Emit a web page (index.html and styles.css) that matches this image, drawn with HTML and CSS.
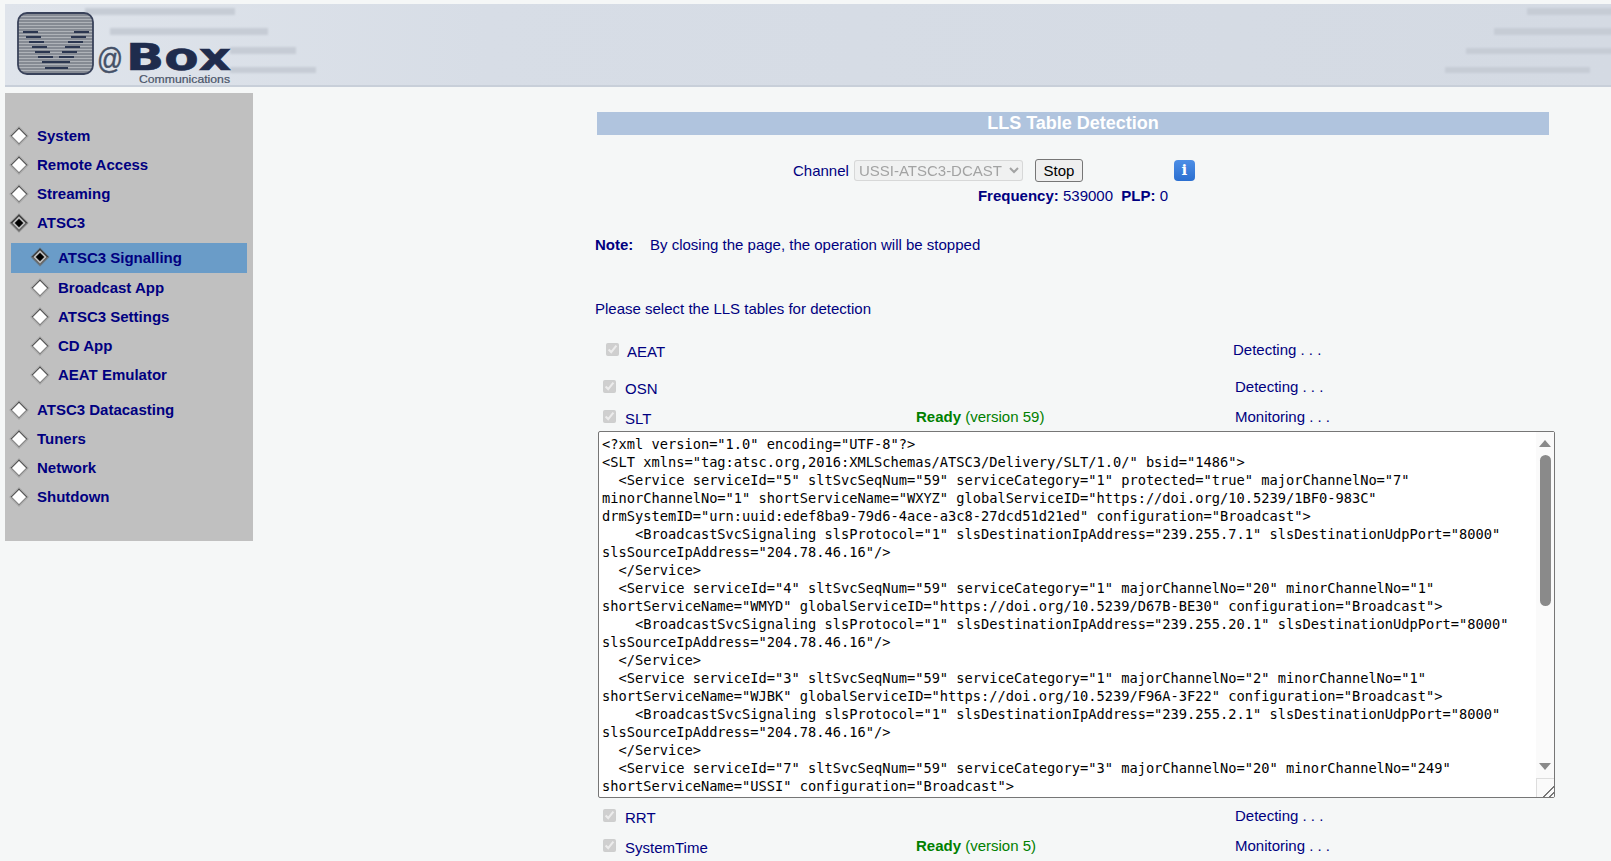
FILE: index.html
```html
<!DOCTYPE html>
<html lang="en">
<head>
    <meta charset="UTF-8">
    <title>LLS Table Detection</title>
    <link rel="stylesheet" href="styles.css">
</head>
<body>
    <header class="banner">
        <svg class="banner-art" width="1606" height="83" viewBox="0 0 1606 83">
            <defs>
                <linearGradient id="bannerBg" x1="0" x2="1" y1="0" y2="0">
                    <stop offset="0" stop-color="#dfe4eb"/>
                    <stop offset="0.3" stop-color="#d7dde6"/>
                    <stop offset="1" stop-color="#d4dae3"/>
                </linearGradient>
                <filter id="soft"><feGaussianBlur stdDeviation="1.1"/></filter>
                <pattern id="scan" width="4" height="3" patternUnits="userSpaceOnUse">
                    <rect width="4" height="3" fill="#858a93"/>
                    <rect width="4" height="1" fill="#afb3b9"/>
                </pattern>
            </defs>
            <rect width="1606" height="83" fill="url(#bannerBg)"/>
            <rect y="81" width="1606" height="2" fill="#c8cfd9"/>
            <g fill="#c6ccd5" filter="url(#soft)">
                <rect x="80" y="4" width="150" height="7"/>
                <rect x="105" y="24" width="158" height="7"/>
                <rect x="225" y="43" width="66" height="7"/>
                <rect x="225" y="63" width="86" height="6"/>
                <rect x="1522" y="4" width="90" height="7"/>
                <rect x="1489" y="24" width="120" height="7"/>
                <rect x="1461" y="44" width="150" height="6"/>
                <rect x="1440" y="63" width="145" height="6"/>
            </g>
            <rect x="13" y="9" width="75" height="61" rx="9" fill="url(#scan)" stroke="#39425a" stroke-width="1.8"/>
            <g fill="#2b3650">
                <rect x="18" y="27" width="15" height="2"/><rect x="69" y="27" width="15" height="2"/>
                <rect x="21" y="32" width="15" height="2"/><rect x="66" y="32" width="15" height="2"/>
                <rect x="24" y="37" width="15" height="2"/><rect x="63" y="37" width="15" height="2"/>
                <rect x="27" y="42" width="15" height="2"/><rect x="60" y="42" width="15" height="2"/>
                <rect x="30" y="47" width="15" height="2"/><rect x="57" y="47" width="15" height="2"/>
                <rect x="33" y="52" width="15" height="2"/><rect x="54" y="52" width="15" height="2"/>
                <rect x="37" y="57" width="28" height="2"/>
                <rect x="40" y="63" width="23" height="2"/>
            </g>
            <text class="logo-at" x="92" y="65" textLength="26" lengthAdjust="spacingAndGlyphs">@</text>
            <text class="logo-box" x="121" y="66" textLength="105" lengthAdjust="spacingAndGlyphs">Box</text>
            <text class="logo-sub" x="134" y="79" textLength="91" lengthAdjust="spacingAndGlyphs">Communications</text>
        </svg>
    </header>

    <div class="page">
        <nav class="sidebar">
            <a class="nav-item"><span class="diamond"></span><span class="nav-label">System</span></a>
            <a class="nav-item"><span class="diamond"></span><span class="nav-label">Remote Access</span></a>
            <a class="nav-item"><span class="diamond"></span><span class="nav-label">Streaming</span></a>
            <a class="nav-item"><span class="diamond open"></span><span class="nav-label">ATSC3</span></a>
            <div class="submenu">
                <a class="nav-item sub current"><span class="diamond open"></span><span class="nav-label">ATSC3 Signalling</span></a>
                <a class="nav-item sub"><span class="diamond"></span><span class="nav-label">Broadcast App</span></a>
                <a class="nav-item sub"><span class="diamond"></span><span class="nav-label">ATSC3 Settings</span></a>
                <a class="nav-item sub"><span class="diamond"></span><span class="nav-label">CD App</span></a>
                <a class="nav-item sub"><span class="diamond"></span><span class="nav-label">AEAT Emulator</span></a>
            </div>
            <a class="nav-item"><span class="diamond"></span><span class="nav-label">ATSC3 Datacasting</span></a>
            <a class="nav-item"><span class="diamond"></span><span class="nav-label">Tuners</span></a>
            <a class="nav-item"><span class="diamond"></span><span class="nav-label">Network</span></a>
            <a class="nav-item"><span class="diamond"></span><span class="nav-label">Shutdown</span></a>
        </nav>

        <main class="content">
            <h1 class="title">LLS Table Detection</h1>
            <div class="channel-row">
                <label class="channel-label">Channel</label>
                <select class="channel-select" disabled><option>USSI-ATSC3-DCAST</option></select>
                <button class="stop-btn">Stop</button>
                <span class="info-btn">i</span>
            </div>
            <p class="freq"><b>Frequency:</b> 539000&nbsp; <b>PLP:</b> 0</p>
            <p class="note"><b class="note-tag">Note:</b>By closing the page, the operation will be stopped</p>
            <p class="prompt">Please select the LLS tables for detection</p>

            <div class="table-row first">
                <label class="table-name"><input type="checkbox" checked disabled>AEAT</label>
                <span class="table-ready"></span>
                <span class="table-state">Detecting . . .</span>
            </div>
            <div class="table-row osn">
                <label class="table-name"><input type="checkbox" checked disabled>OSN</label>
                <span class="table-ready"></span>
                <span class="table-state">Detecting . . .</span>
            </div>
            <div class="table-row slt">
                <label class="table-name"><input type="checkbox" checked disabled>SLT</label>
                <span class="table-ready"><b>Ready</b> (version 59)</span>
                <span class="table-state">Monitoring . . .</span>
            </div>
            <div class="xml-box">
                <textarea class="xml-view" readonly spellcheck="false">&lt;?xml version="1.0" encoding="UTF-8"?&gt;
&lt;SLT xmlns="tag:atsc.org,2016:XMLSchemas/ATSC3/Delivery/SLT/1.0/" bsid="1486"&gt;
  &lt;Service serviceId="5" sltSvcSeqNum="59" serviceCategory="1" protected="true" majorChannelNo="7" minorChannelNo="1" shortServiceName="WXYZ" globalServiceID="https://doi.org/10.5239/1BF0-983C" drmSystemID="urn:uuid:edef8ba9-79d6-4ace-a3c8-27dcd51d21ed" configuration="Broadcast"&gt;
    &lt;BroadcastSvcSignaling slsProtocol="1" slsDestinationIpAddress="239.255.7.1" slsDestinationUdpPort="8000" slsSourceIpAddress="204.78.46.16"/&gt;
  &lt;/Service&gt;
  &lt;Service serviceId="4" sltSvcSeqNum="59" serviceCategory="1" majorChannelNo="20" minorChannelNo="1" shortServiceName="WMYD" globalServiceID="https://doi.org/10.5239/D67B-BE30" configuration="Broadcast"&gt;
    &lt;BroadcastSvcSignaling slsProtocol="1" slsDestinationIpAddress="239.255.20.1" slsDestinationUdpPort="8000" slsSourceIpAddress="204.78.46.16"/&gt;
  &lt;/Service&gt;
  &lt;Service serviceId="3" sltSvcSeqNum="59" serviceCategory="1" majorChannelNo="2" minorChannelNo="1" shortServiceName="WJBK" globalServiceID="https://doi.org/10.5239/F96A-3F22" configuration="Broadcast"&gt;
    &lt;BroadcastSvcSignaling slsProtocol="1" slsDestinationIpAddress="239.255.2.1" slsDestinationUdpPort="8000" slsSourceIpAddress="204.78.46.16"/&gt;
  &lt;/Service&gt;
  &lt;Service serviceId="7" sltSvcSeqNum="59" serviceCategory="3" majorChannelNo="20" minorChannelNo="249" shortServiceName="USSI" configuration="Broadcast"&gt;</textarea>
                <div class="fake-scroll">
                    <span class="arrow up"></span>
                    <div class="scroll-track"><span class="scroll-thumb"></span></div>
                    <span class="arrow down"></span>
                    <span class="grip"></span>
                </div>
            </div>
            <div class="table-row rrt">
                <label class="table-name"><input type="checkbox" checked disabled>RRT</label>
                <span class="table-ready"></span>
                <span class="table-state">Detecting . . .</span>
            </div>
            <div class="table-row">
                <label class="table-name"><input type="checkbox" checked disabled>SystemTime</label>
                <span class="table-ready"><b>Ready</b> (version 5)</span>
                <span class="table-state">Monitoring . . .</span>
            </div>
        </main>
    </div>
</body>
</html>
```

FILE: styles.css
```css
* {
    box-sizing: border-box;
}
html, body {
    height: 861px;
    overflow: hidden;
}
body {
    margin: 0;
    padding: 4px 0 0 5px;
    background: #f5f7f7;
    color: #000080;
    font-family: "Liberation Sans", Arial, sans-serif;
    font-size: 15px;
}
.banner {
    height: 83px;
}
.banner-art {
    display: block;
}
.logo-at {
    font-family: "Liberation Sans", sans-serif;
    font-size: 30px;
    fill: #445067;
    stroke: #445067;
    stroke-width: 0.5px;
}
.logo-box {
    font-family: "DejaVu Sans", sans-serif;
    font-weight: bold;
    font-size: 37px;
    fill: #1f2c4d;
    stroke: #1f2c4d;
    stroke-width: 0.6px;
}
.logo-sub {
    font-family: "Liberation Sans", sans-serif;
    font-size: 11px;
    fill: #4a5468;
    stroke: #4a5468;
    stroke-width: 0.2px;
}
.page {
    display: flex;
    margin-top: 6px;
}

/* left menu */
.sidebar {
    width: 248px;
    height: 448px;
    flex: none;
    padding: 28px 6px 0;
    background: #c0c0c0;
}
.nav-item {
    display: flex;
    align-items: center;
    height: 29px;
    font-size: 15px;
    font-weight: bold;
    color: #000080;
}
.nav-label {
    margin-left: 11px;
}
.submenu {
    margin: 6px 0;
}
.nav-item.sub {
    padding-left: 21px;
}
.nav-item.sub.current {
    height: 30px;
    padding-bottom: 2px;
    background: #6a9cc8;
}
.diamond {
    width: 12px;
    height: 12px;
    margin-left: 2px;
    margin-right: 1px;
    flex: none;
    transform: rotate(45deg);
    background: #fff;
    border: 1px solid #777;
    border-top-color: #444;
    border-left-color: #444;
    box-shadow: 0 0 0 1px rgba(120, 120, 120, 0.35);
}
.diamond.open {
    background: #000;
    box-shadow: inset 0 0 0 2px #b8b8b8, 0 0 0 1px rgba(120, 120, 120, 0.35);
}

/* main column */
.content {
    width: 959px;
    margin-left: 342px;
    padding-top: 19px;
}
.title {
    height: 23px;
    margin: 0 5px 0 2px;
    background: #b0c4de;
    color: #fff;
    font-size: 18px;
    line-height: 23px;
    text-align: center;
}
.channel-row {
    display: flex;
    align-items: center;
    height: 24px;
    margin-top: 23px;
    padding-left: 198px;
}
.channel-select {
    width: 169px;
    height: 21px;
    margin-left: 5px;
    font-family: inherit;
    font-size: 15px;
    border-radius: 3px;
}
.stop-btn {
    width: 48px;
    height: 23px;
    margin-left: 12px;
    padding: 0;
    font-family: inherit;
    font-size: 15px;
    color: #000;
    background: #efefef;
    border: 1px solid #767676;
    border-radius: 3px;
}
.info-btn {
    width: 21px;
    height: 21px;
    margin-left: 91px;
    border-radius: 4px;
    background: linear-gradient(#4d8ee6, #2b6fd0);
    color: #fff;
    font-family: "DejaVu Serif", serif;
    font-size: 15px;
    font-weight: bold;
    line-height: 21px;
    text-align: center;
}
.freq {
    margin: 4px 0 0;
    height: 20px;
    padding-right: 3px;
    line-height: 20px;
    text-align: center;
}
.note {
    margin: 29px 0 0;
    line-height: 20px;
}
.note-tag {
    display: inline-block;
    width: 55px;
}
.prompt {
    margin: 44px 0 0;
    line-height: 20px;
}
.table-row {
    display: grid;
    grid-template-columns: 313px 319px 1fr;
    align-items: center;
    height: 24px;
    padding-left: 8px;
}
.table-row.first {
    margin-top: 20px;
    padding-left: 11px;
    grid-template-columns: 311px 316px 1fr;
}
.table-row.osn {
    margin-top: 13px;
}
.table-row.slt {
    margin-top: 6px;
}
.table-row.rrt {
    margin-top: 7px;
    margin-bottom: 6px;
}
.table-name {
    display: flex;
    align-items: center;
}
.table-name input {
    margin: 0 9px 4px 0;
}
.table-row.first input {
    margin-right: 8px;
}
.table-ready, .table-state {
    padding-bottom: 4px;
}
.table-ready {
    color: #008000;
}

/* xml box; the scrollbar column is drawn by hand so it shows in every window */
.xml-box {
    position: relative;
    width: 957px;
    height: 367px;
    margin: 1px 0 0 3px;
}
.xml-view {
    display: block;
    width: 100%;
    height: 100%;
    padding: 3px 22px 3px 3px;
    font-family: "DejaVu Sans Mono", monospace;
    font-size: 13.7px;
    line-height: 18px;
    color: #000;
    background: #fff;
    border: 1px solid #767676;
    border-radius: 2px;
    resize: none;
    overflow: hidden;
    outline: none;
}
.fake-scroll {
    position: absolute;
    top: 1px;
    right: 1px;
    bottom: 1px;
    width: 18px;
    display: flex;
    flex-direction: column;
    align-items: center;
    background: #fafafa;
}
.arrow {
    width: 0;
    height: 0;
    flex: none;
    border-left: 6.5px solid transparent;
    border-right: 6.5px solid transparent;
}
.arrow.up {
    margin-top: 8px;
    border-bottom: 7px solid #8a8a8a;
}
.arrow.down {
    border-top: 7px solid #8a8a8a;
}
.scroll-track {
    flex: 1;
    width: 11px;
    padding-top: 8px;
}
.scroll-thumb {
    display: block;
    height: 151px;
    background: #8a8a8a;
    border-radius: 6px;
}
.grip {
    align-self: stretch;
    height: 19px;
    margin-top: 8px;
    border-top: 1px solid #ddd;
    border-left: 1px solid #ddd;
    background: linear-gradient(135deg, transparent 68%, #777 68%, #777 74%, transparent 74%, transparent 84%, #777 84%, #777 90%, transparent 90%);
}
```
